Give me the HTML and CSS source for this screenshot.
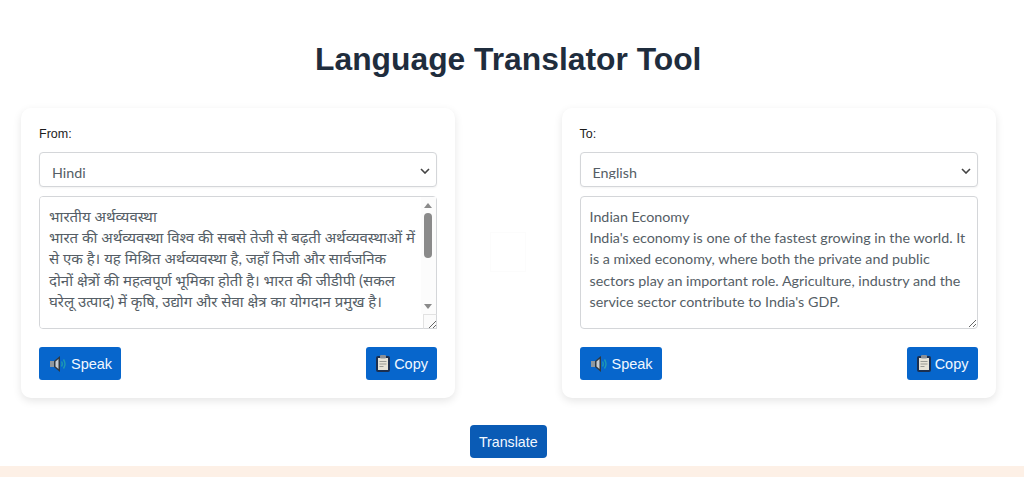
FILE: index.html
```html
<!DOCTYPE html>
<html lang="en">
<head>
    <meta charset="UTF-8">
    <meta name="viewport" content="width=device-width, initial-scale=1.0">
    <title>Language Translator Tool</title>
    <link rel="stylesheet" href="styles.css">
</head>
<body>
    <div class="container">
        <h1>Language Translator Tool</h1>
        <div class="panels">
            <div class="card">
                <label class="field-label" for="fromLang">From:</label>
                <select id="fromLang" class="lang-select">
                    <option>Hindi</option>
                </select>
                <div class="text-wrap">
                    <textarea class="text-box hindi" wrap="off" spellcheck="false">भारतीय अर्थव्यवस्था
भारत की अर्थव्यवस्था विश्व की सबसे तेजी से बढ़ती अर्थव्यवस्थाओं में
से एक है। यह मिश्रित अर्थव्यवस्था है, जहाँ निजी और सार्वजनिक
दोनों क्षेत्रों की महत्वपूर्ण भूमिका होती है। भारत की जीडीपी (सकल
घरेलू उत्पाद) में कृषि, उद्योग और सेवा क्षेत्र का योगदान प्रमुख है।

सेवा क्षेत्र देश की अर्थव्यवस्था में सबसे बड़ा योगदान देता है।</textarea>
                    <div class="scroll-bar">
                        <span class="arrow-up"></span>
                        <span class="scroll-thumb"></span>
                        <span class="arrow-down"></span>
                    </div>
                    <div class="scroll-corner">
                        <svg viewBox="0 0 14 15" width="14" height="15"><path d="M5 13l7-7M9 13l3-3" stroke="#666" stroke-width="1" fill="none"/></svg>
                    </div>
                </div>
                <div class="actions">
                    <button class="btn">
                        <svg class="icon" viewBox="0 0 16 16"><path d="M0 5h4v6H0z" fill="#8f989f"/><path d="M4 5l6-5v16l-6-5z" fill="#2f3a44"/><path d="M5.500 5.500l3-2.500v10l-3-2.500z" fill="#c8cdd2"/><path d="M11.500 5.500q1.500 2.500 0 5M13.500 3.500q3 4.500 0 9" fill="none" stroke="#1f9bb0" stroke-width="1.400"/></svg>
                        Speak
                    </button>
                    <button class="btn">
                        <svg class="icon icon-copy" viewBox="0 0 14 17"><rect x="0" y="1" width="14" height="16" rx="2" fill="#1c2f4f"/><rect x="2" y="3" width="10" height="12" fill="#e8e4d8"/><rect x="4" y="0" width="6" height="3.500" rx="1" fill="#8a8f96"/><path d="M3.500 6.500h7M3.500 9h7M3.500 11.500h4" stroke="#9a9a94" stroke-width="1"/></svg>
                        Copy
                    </button>
                </div>
            </div>

            <div class="swap-box"></div>

            <div class="card">
                <label class="field-label" for="toLang">To:</label>
                <select id="toLang" class="lang-select">
                    <option>English</option>
                </select>
                <div class="text-wrap">
                    <textarea class="text-box" spellcheck="false">Indian Economy
India's economy is one of the fastest growing in the world. It is a mixed economy, where both the private and public sectors play an important role. Agriculture, industry and the service sector contribute to India's GDP.</textarea>
                </div>
                <div class="actions">
                    <button class="btn">
                        <svg class="icon" viewBox="0 0 16 16"><path d="M0 5h4v6H0z" fill="#8f989f"/><path d="M4 5l6-5v16l-6-5z" fill="#2f3a44"/><path d="M5.500 5.500l3-2.500v10l-3-2.500z" fill="#c8cdd2"/><path d="M11.500 5.500q1.500 2.500 0 5M13.500 3.500q3 4.500 0 9" fill="none" stroke="#1f9bb0" stroke-width="1.400"/></svg>
                        Speak
                    </button>
                    <button class="btn">
                        <svg class="icon icon-copy" viewBox="0 0 14 17"><rect x="0" y="1" width="14" height="16" rx="2" fill="#1c2f4f"/><rect x="2" y="3" width="10" height="12" fill="#e8e4d8"/><rect x="4" y="0" width="6" height="3.500" rx="1" fill="#8a8f96"/><path d="M3.500 6.500h7M3.500 9h7M3.500 11.500h4" stroke="#9a9a94" stroke-width="1"/></svg>
                        Copy
                    </button>
                </div>
            </div>
        </div>
        <div class="translate-row">
            <button class="translate-btn">Translate</button>
        </div>
    </div>
    <div class="footer-strip"></div>
</body>
</html>
```

FILE: styles.css
```css
html, body {
    height: 100%;
}
body {
    margin: 0;
    background-color: #fff;
    font-family: "Liberation Sans", Arial, sans-serif;
    display: flex;
    flex-direction: column;
    overflow: hidden;
}
.container {
    flex: 1;
    padding: 0 28.500px 0 21px;
}
h1 {
    margin: 0;
    padding-top: 40px;
    box-sizing: border-box;
    height: 108px;
    text-align: center;
    font-size: 31.800px;
    line-height: 38px;
    font-weight: bold;
    color: #1f2d3d;
}
.panels {
    display: flex;
    justify-content: space-between;
    align-items: flex-start;
}
.card {
    width: 434px;
    height: 290px;
    box-sizing: border-box;
    padding: 18px;
    background-color: #fff;
    border-radius: 10px;
    box-shadow: 0 3px 8px rgba(0, 0, 0, 0.1);
    display: flex;
    flex-direction: column;
}
.swap-box {
    width: 36px;
    height: 40px;
    margin-top: 124px;
    border: 1px solid #fcfcfc;
    box-sizing: border-box;
}
.field-label {
    font-size: 12.500px;
    line-height: 16px;
    color: #1c1c1c;
    margin-bottom: 10px;
}
.lang-select {
    appearance: none;
    height: 35px;
    box-sizing: border-box;
    padding: 11px 12px 7px;
    border: 1px solid #d4d6d9;
    border-radius: 4px;
    background-color: #fff;
    background-image: url("data:image/svg+xml,%3Csvg xmlns='http://www.w3.org/2000/svg' width='10' height='6'%3E%3Cpath d='M1 1l4 4 4-4' fill='none' stroke='%23444' stroke-width='1.600'/%3E%3C/svg%3E");
    background-repeat: no-repeat;
    background-position: right 6px top 15px;
    font-family: Lato, "Noto Sans", sans-serif;
    font-size: 14.300px;
    color: #555e66;
    box-shadow: 0 1px 2px rgba(0, 0, 0, 0.05);
}
.text-wrap {
    position: relative;
    margin-top: 9px;
    height: 133px;
}
.text-box {
    display: block;
    width: 100%;
    height: 133px;
    box-sizing: border-box;
    padding: 9px;
    border: 1px solid #d4d6d9;
    border-radius: 4px;
    font-family: Lato, "Noto Sans", sans-serif;
    font-size: 14.300px;
    line-height: 21.200px;
    color: #555e66;
    resize: vertical;
    outline: none;
}
.hindi {
    font-size: 15px;
    padding-right: 16px;
}
.scroll-bar {
    position: absolute;
    top: 1px;
    right: 1px;
    bottom: 15px;
    width: 15px;
    background-color: #fcfcfc;
}
.scroll-thumb {
    position: absolute;
    top: 16px;
    left: 3px;
    width: 8px;
    height: 45px;
    border-radius: 4px;
    background-color: #8a8a8a;
}
.arrow-up,
.arrow-down {
    position: absolute;
    left: 3px;
    width: 0;
    height: 0;
    border-left: 4px solid transparent;
    border-right: 4px solid transparent;
}
.arrow-up {
    top: 6px;
    border-bottom: 5px solid #8a8a8a;
}
.arrow-down {
    bottom: 5px;
    border-top: 5px solid #8a8a8a;
}
.scroll-corner {
    position: absolute;
    right: 0;
    bottom: 0;
    width: 14px;
    height: 15px;
    background-color: #fbfbfb;
    border-left: 1px solid #e2e2e2;
    border-top: 1px solid #e2e2e2;
    border-right: 1px solid #d4d6d9;
    border-bottom: 1px solid #d4d6d9;
    box-sizing: border-box;
}
.scroll-corner svg {
    display: block;
}
.actions {
    display: flex;
    justify-content: space-between;
    margin-top: 18px;
}
.btn {
    display: flex;
    align-items: center;
    gap: 5px;
    height: 33px;
    padding: 0 9px 0 11px;
    border: none;
    border-radius: 3px;
    background-color: #0766cc;
    color: #f2f8ff;
    font-family: "Liberation Sans", Arial, sans-serif;
    font-size: 14.500px;
    cursor: pointer;
}
.icon {
    width: 16px;
    height: 16px;
}
.icon-copy {
    width: 14px;
    height: 17px;
    margin-left: -1px;
    margin-right: -1px;
}
.translate-row {
    display: flex;
    justify-content: center;
    margin-top: 27px;
}
.translate-btn {
    width: 77px;
    height: 33px;
    padding: 0;
    border: none;
    border-radius: 4px;
    background-color: #0a5bb5;
    color: #f2f8ff;
    font-family: "Liberation Sans", Arial, sans-serif;
    font-size: 14.200px;
    cursor: pointer;
}
.footer-strip {
    height: 11px;
    background-color: #fdf0e6;
}
```
